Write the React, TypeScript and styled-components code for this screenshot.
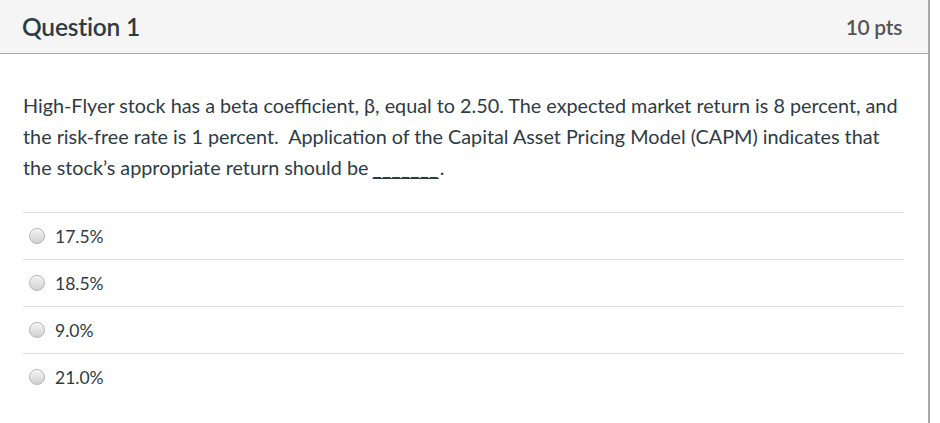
import React from "react";
import styled, { createGlobalStyle } from "styled-components";

const GlobalStyle = createGlobalStyle`
  html, body {
    margin: 0;
    padding: 0;
    background: #ffffff;
  }
  body {
    font-family: Lato, "Helvetica Neue", Arial, sans-serif;
    color: #2d3b45;
  }
`;

interface Answer {
  id: string;
  label: string;
}

const answers: Answer[] = [
  { id: "a1", label: "17.5%" },
  { id: "a2", label: "18.5%" },
  { id: "a3", label: "9.0%" },
  { id: "a4", label: "21.0%" },
];

const App: React.FC = () => {
  return (
    <>
      <GlobalStyle />
      <QuestionCard>
        <Header>
          <Title>Question 1</Title>
          <Points>10 pts</Points>
        </Header>
        <Body>
          <QuestionText>
            High-Flyer stock has a beta coefficient, β, equal to 2.50. The
            expected market return is 8 percent, and the risk-free rate is 1
            percent.&nbsp; Application of the Capital Asset Pricing Model (CAPM)
            indicates that the stock’s appropriate return should be
            <Blank>_______</Blank>.
          </QuestionText>
          <AnswerList>
            {answers.map((a) => (
              <AnswerRow key={a.id}>
                <Radio />
                <AnswerLabel>{a.label}</AnswerLabel>
              </AnswerRow>
            ))}
          </AnswerList>
        </Body>
      </QuestionCard>
    </>
  );
};

const QuestionCard = styled.div`
  width: 928px;
  height: 423px;
  border-right: 2px solid #a8a8a8;
  background: #ffffff;
`;

const Header = styled.div`
  height: 53px;
  display: flex;
  align-items: center;
  justify-content: space-between;
  padding: 0 26px 0 22px;
  background: #f5f5f5;
  border-bottom: 1px solid #a8a8a8;
`;

const Title = styled.div`
  font-size: 24.5px;
  font-weight: 600;
  color: #2d3b45;
  letter-spacing: -0.2px;
`;

const Points = styled.div`
  font-size: 21px;
  font-weight: 600;
  color: #555555;
  letter-spacing: -0.3px;
`;

const Body = styled.div`
  padding: 36px 25px 0 23px;
`;

const QuestionText = styled.p`
  margin: 0 -10px 0 0;
  font-size: 19.8px;
  line-height: 31px;
  color: #2d3b45;
`;

const Blank = styled.span`
  margin-left: 4px;
  margin-right: 1px;
  letter-spacing: 0.4px;
  text-decoration: underline;
  text-decoration-thickness: 1px;
  text-underline-offset: 3px;
`;

const AnswerList = styled.div`
  margin-top: 29px;
`;

const AnswerRow = styled.div`
  height: 46px;
  display: flex;
  align-items: center;
  gap: 10px;
  padding-left: 6px;
  border-top: 1px solid #dddddd;
`;

const Radio = styled.span`
  width: 14px;
  height: 14px;
  border-radius: 50%;
  border: 1px solid #b3b3b3;
  background: linear-gradient(180deg, #f2f2f2 0%, #d2d2d2 100%);
  box-shadow: inset 0 1px 1px rgba(255, 255, 255, 0.8);
  flex-shrink: 0;
`;

const AnswerLabel = styled.span`
  font-size: 17.5px;
  color: #2d3b45;
`;

export default App;
